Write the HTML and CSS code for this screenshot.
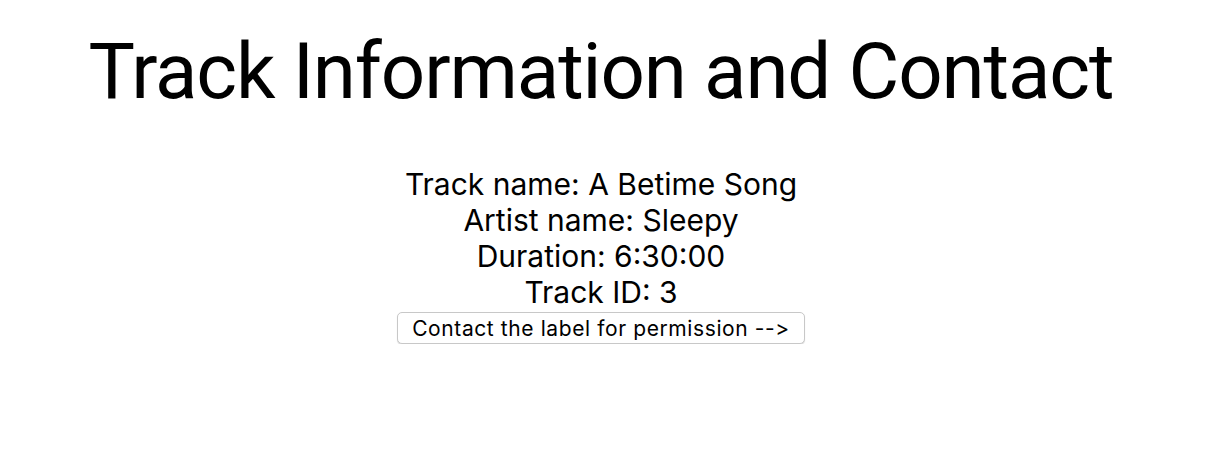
FILE: index.html
```html
<!DOCTYPE html>
<html>
<head>
<meta charset="utf-8">
<link rel="stylesheet" href="styles.css">
</head>
<body>
<main class="page">
  <h1 class="title">Track Information and Contact</h1>
  <section class="info">
    <div class="line">Track name: A Betime Song</div>
    <div class="line">Artist name: Sleepy</div>
    <div class="line">Duration: 6:30:00</div>
    <div class="line">Track ID: 3</div>
    <button class="contact">Contact the label for permission --&gt;</button>
  </section>
</main>
</body>
</html>
```
FILE: styles.css
```css
html, body {
  margin: 0;
  background: #fff;
}
.page {
  width: 1202px;
  display: flex;
  flex-direction: column;
  align-items: center;
  font-family: Inter, "Noto Sans", sans-serif;
  color: #000;
}
.title {
  margin: 22px 0 0;
  font-family: Roboto, Inter, sans-serif;
  font-size: 78px;
  font-weight: 400;
  line-height: 100px;
  letter-spacing: -1.1px;
}
.info {
  margin-top: 44px;
  display: flex;
  flex-direction: column;
  align-items: center;
}
.line {
  font-size: 30px;
  line-height: 36px;
}
.contact {
  margin-top: 2px;
  height: 32px;
  padding: 0 14px;
  font-family: Inter, sans-serif;
  font-size: 21px;
  letter-spacing: 0.6px;
  color: #000;
  background: #fff;
  border: 1px solid #c8c8c8;
  border-radius: 5px;
  box-shadow: 0 1px 1px rgba(0,0,0,0.15);
}
```
